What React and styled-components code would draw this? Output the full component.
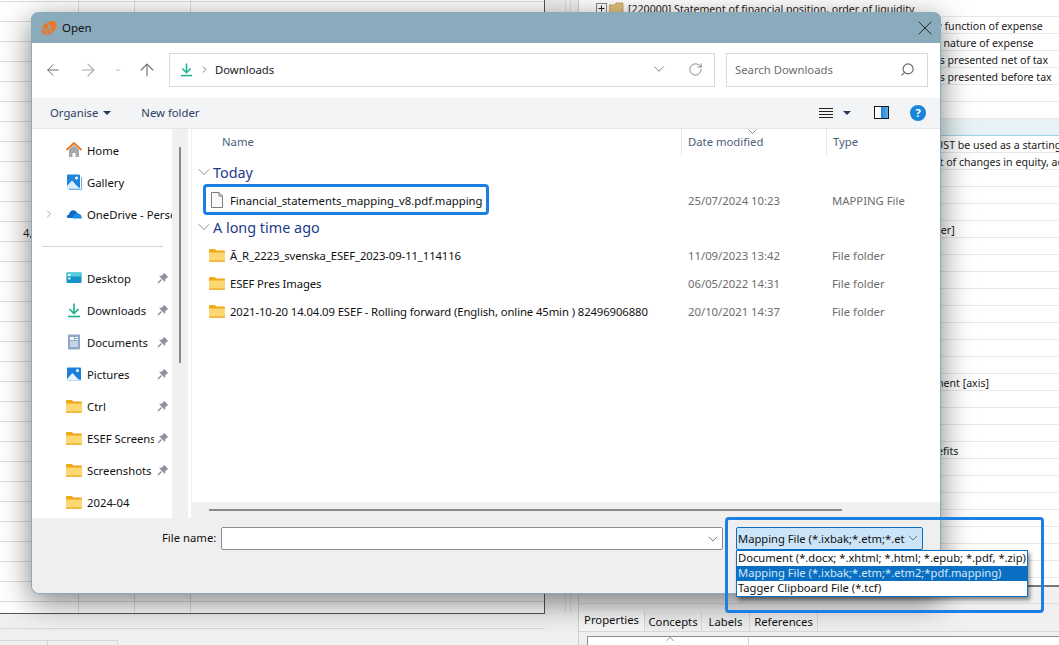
import styled, { createGlobalStyle } from "styled-components";
import { ArrowLeft, ArrowRight, ArrowUp, ChevronDown, ChevronRight, ChevronUp, RotateCw, Search, X } from "lucide-react";

const GlobalStyle = createGlobalStyle`
  html, body {
    margin: 0;
    padding: 0;
    background: #f0f0f0;
  }
  * {
    box-sizing: border-box;
  }
  body {
    font-family: "Noto Sans", "Open Sans", sans-serif;
    font-size: 11.3px;
    color: #1a1a1a;
  }
`;

const Page = styled.div`
  position: relative;
  width: 1059px;
  height: 645px;
  overflow: hidden;
  display: grid;
  grid-template-columns: 545px 33px 481px;
`;

/* sheet behind the dialog */
const SheetColumn = styled.div`
  display: flex;
  flex-direction: column;
  height: 645px;
`;

const Sheet = styled.div`
  height: 614px;
  flex: none;
  background: #fff;
  border-right: 1px solid #555;
  border-bottom: 1px solid #555;
  overflow: hidden;
`;

const SheetRow = styled.div`
  display: grid;
  grid-template-columns: 79px 56px 56px 1fr;
  height: 20px;
  border-bottom: 1px solid #dcdcdc;
  &:first-child {
    height: 2px;
  }
`;

const SheetCell = styled.div`
  border-right: 1px solid #dcdcdc;
  line-height: 21px;
  padding-left: 23px;
  white-space: nowrap;
  overflow: hidden;
`;

const SheetFooter = styled.div`
  flex: 1;
  display: flex;
  flex-direction: column;
`;

const FooterRule = styled.div`
  height: 15px;
  border-bottom: 1px solid #d6d6d6;
`;

const SheetTabs = styled.div`
  display: flex;
  margin-top: 11px;
`;

const SheetTab = styled.div`
  width: ${(p) => p.$w}px;
  height: 8px;
  border: 1px solid #d6d6d6;
  border-bottom: 0;
  border-left: 0;
`;

const Splitter = styled.div`
  display: flex;
  justify-content: space-between;
  padding: 0 7px 32px 20px;
  height: 645px;
`;

const SplitLine = styled.div`
  width: 1px;
  background: #dcdcdc;
`;

const RightColumn = styled.div`
  display: flex;
  flex-direction: column;
  min-width: 0;
  overflow: hidden;
  border-left: 1px solid #cfcfcf;
`;

const TreeList = styled.div`
  height: 587px;
  flex: none;
  background: #fff;
  border-bottom: 2px solid #777;
  overflow: hidden;
`;

const TreeRow = styled.div`
  height: 17px;
  line-height: 16px;
  font-size: 10.6px;
  padding: 1px 0 0 ${(p) => p.$indent}px;
  border-bottom: 1px solid ${(p) => (p.$active ? "#9fd3ea" : "#e8e8e8")};
  background: ${(p) => (p.$active ? "#e6f2f5" : "transparent")};
  white-space: nowrap;
  overflow: hidden;
  display: flex;
  align-items: center;
`;

const TreeIcon = styled.svg`
  width: ${(p) => p.$w}px;
  height: 13px;
  flex: none;
  margin-right: ${(p) => p.$gap}px;
`;

const BottomPanel = styled.div`
  flex: 1;
  background: #f0f0f0;
`;

const PanelRule = styled.div`
  margin-top: 16px;
  height: 1px;
  background: #dedede;
`;

const Tabs = styled.div`
  display: flex;
  align-items: flex-end;
  height: 20px;
  margin-top: 8px;
  border-bottom: 1px solid #d8d8d8;
`;

const Tab = styled.div`
  height: ${(p) => (p.$active ? 20 : 19)}px;
  width: ${(p) => p.$w}px;
  line-height: ${(p) => (p.$active ? 17 : 19)}px;
  text-align: center;
  border-right: 1px solid #d8d8d8;
  background: ${(p) => (p.$active ? "#f6f6f6" : "#eeeeee")};
  color: #111;
`;

const PropHead = styled.div`
  position: relative;
  margin: 4px 0 0 8px;
  height: 20px;
  background: #fff;
  border: 1px solid #8d8d8d;
  border-right: 0;
  display: grid;
  grid-template-columns: 160px 1fr;
`;

const PropCol = styled.div`
  padding: 6px 0 0 7px;
  line-height: 14px;
  & + & {
    border-left: 1px solid #d4d4d4;
  }
`;

const PropSort = styled.span`
  position: absolute;
  left: 75px;
  top: -5px;
  color: #777;
  display: flex;
`;

/* the dialog is a window lying over the sheet */
const Dialog = styled.div`
  position: absolute;
  left: 31px;
  top: 12px;
  width: 910px;
  height: 582px;
  background: #efefef;
  border: 1px solid #8aaabc;
  border-top: 0;
  border-radius: 8px;
  box-shadow: 0 8px 30px rgba(0, 0, 0, 0.5);
  display: flex;
  flex-direction: column;
`;

const TitleBar = styled.div`
  height: 31px;
  flex: none;
  margin: 0 -1px;
  background: #8aabbc;
  border-radius: 8px 8px 0 0;
  display: flex;
  align-items: center;
  padding: 0 4px 0 10px;
`;

const TitleText = styled.span`
  margin-left: 5px;
  flex: 1;
  font-size: 11.5px;
  color: #111;
`;

const AddressBar = styled.div`
  height: 55px;
  flex: none;
  background: #fff;
  display: flex;
  align-items: center;
  padding: 0 12px 1px 12px;
`;

const NavButton = styled.div`
  width: ${(p) => p.$w}px;
  margin-left: ${(p) => p.$left || 0}px;
  display: flex;
  justify-content: center;
  color: ${(p) => p.$color};
`;

const PathBox = styled.div`
  width: 546px;
  height: 34px;
  margin-left: 4px;
  border: 1px solid #d9d9d9;
  display: flex;
  align-items: center;
  padding: 0 11px 2px 9px;
`;

const PathArrow = styled.span`
  display: flex;
  margin-left: 5px;
  color: #666;
`;

const PathName = styled.span`
  flex: 1;
  margin-left: 5px;
  color: #1a1a1a;
`;

const Refresh = styled.span`
  display: flex;
  margin-left: 20px;
  color: #6b6b6b;
`;

const SearchBox = styled.div`
  width: 202px;
  height: 34px;
  margin-left: 11px;
  border: 1px solid #d9d9d9;
  display: flex;
  align-items: center;
  justify-content: space-between;
  padding: 0 12px 2px 8px;
  color: #6d6d6d;
`;

const SearchGlass = styled.span`
  display: flex;
  transform: scaleX(-1);
  color: #666;
`;

const CommandBar = styled.div`
  height: 31px;
  flex: none;
  background: #f3f4f6;
  border-bottom: 1px solid #e6e6e6;
  display: flex;
  align-items: center;
  padding: 0 14px 1px 18px;
  color: #2b3d63;
`;

const Caret = styled.span`
  width: 0;
  height: 0;
  border-left: 4px solid transparent;
  border-right: 4px solid transparent;
  border-top: 4px solid #26395e;
  margin-left: ${(p) => p.$left}px;
`;

const CommandText = styled.span`
  margin-left: ${(p) => p.$left || 0}px;
`;

const Spacer = styled.div`
  flex: 1;
`;

const Body = styled.div`
  height: 389px;
  flex: none;
  display: flex;
  background: #fff;
`;

const NavPane = styled.div`
  width: 140px;
  flex: none;
  padding-top: 5px;
  overflow: hidden;
`;

const NavRow = styled.div`
  position: relative;
  height: 32px;
  display: flex;
  align-items: center;
  padding-left: 34px;
  color: #111;
`;

const NavExpand = styled.span`
  position: absolute;
  left: 11px;
  top: 10px;
  color: #8a8a8a;
  display: flex;
`;

const NavLabel = styled.span`
  margin-left: 5px;
  margin-right: ${(p) => p.$gap || 0}px;
  width: ${(p) => p.$w || 70}px;
  flex: none;
  white-space: nowrap;
  overflow: hidden;
`;

const NavRule = styled.div`
  height: 32px;
  display: flex;
  align-items: center;
  padding: 0 9px 0 10px;
  &::after {
    content: "";
    flex: 1;
    height: 1px;
    background: #d4d4d4;
  }
`;

const NavTrack = styled.div`
  width: 16px;
  flex: none;
  background: #f0f0f0;
  padding: 18px 7px 0;
`;

const NavThumb = styled.div`
  width: 2px;
  height: 216px;
  background: #8a8a8a;
`;

const ListPane = styled.div`
  flex: 1;
  margin-left: 3px;
  border-left: 1px solid #f0f0f0;
  display: flex;
  flex-direction: column;
  min-width: 0;
`;

const ColumnHeads = styled.div`
  height: 26px;
  flex: none;
  display: grid;
  grid-template-columns: 489px 145px 1fr;
  color: #4c607a;
  line-height: 25px;
`;

const ColumnHead = styled.div`
  position: relative;
  padding-left: ${(p) => p.$pad}px;
  & + & {
    border-left: 1px solid #e5e5e5;
  }
`;

const SortCaret = styled.svg`
  position: absolute;
  left: 66px;
  top: 0;
  width: 9px;
  height: 5px;
`;

const Files = styled.div`
  flex: 1;
  padding-top: 6px;
`;

const GroupHead = styled.div`
  height: 22px;
  display: flex;
  align-items: center;
  padding-left: 2px;
  color: #1e3a8a;
  font-size: 14.4px;
`;

const GroupLabel = styled.span`
  margin-left: -1px;
`;

const FileRow = styled.div`
  height: 28px;
  display: grid;
  grid-template-columns: 489px 144px 1fr;
  align-items: center;
`;

const FileName = styled.div`
  display: flex;
  align-items: center;
  padding-left: 17px;
  white-space: nowrap;
  color: #111;
`;

const FileLabel = styled.span`
  margin-left: 5px;
`;

const FolderLabel = styled(FileLabel)`
  letter-spacing: -0.1px;
`;

const FileMeta = styled.div`
  padding-left: 7px;
  color: #6d6d6d;
`;

const FileGap = styled.div`
  height: ${(p) => p.$h}px;
`;

const HScroll = styled.div`
  height: 16px;
  flex: none;
  background: #f0f0f0;
  padding: 7px 0 0 17px;
`;

const HThumb = styled.div`
  width: 633px;
  height: 2px;
  background: #8a8a8a;
`;

const Footer = styled.div`
  flex: 1;
  display: flex;
  align-items: flex-start;
  padding: 9px 0 0 130px;
  background: #efefef;
  border-radius: 0 0 8px 8px;
`;

const FileNameCaption = styled.label`
  width: 59px;
  flex: none;
  line-height: 21px;
  color: #111;
`;

const NameInput = styled.div`
  width: 502px;
  flex: none;
  height: 23px;
  background: #fff;
  border: 1px solid #8c8c8c;
  border-radius: 2px;
  display: flex;
  justify-content: flex-end;
  align-items: center;
  padding-right: 1px;
  color: #666;
`;

const FilterWrap = styled.div`
  position: relative;
  margin-left: 13px;
  font-size: 11.2px;
`;

const FilterSelect = styled.div`
  width: 187px;
  height: 23px;
  background: #cce4f7;
  border: 1px solid #0a6fc2;
  border-radius: 2px;
  display: flex;
  align-items: center;
  justify-content: space-between;
  padding: 0 1px 1px 1px;
  white-space: nowrap;
  color: #111;
`;

const FilterList = styled.div`
  position: absolute;
  left: 0;
  top: 23px;
  width: 292px;
  height: 47px;
  background: #fff;
  border: 1px solid #0a6fc2;
  box-shadow: 2px 3px 4px rgba(0, 0, 0, 0.45);
  white-space: nowrap;
  z-index: 2;
`;

const FilterItem = styled.div`
  height: 15px;
  line-height: 14px;
  padding-left: 1px;
  background: ${(p) => (p.$selected ? "#0a6fc2" : "transparent")};
  color: ${(p) => (p.$selected ? "#d4e8fa" : "#111")};
`;

/* blue annotations drawn on the screenshot */
const Callout = styled.div`
  position: absolute;
  left: ${(p) => p.$x}px;
  top: ${(p) => p.$y}px;
  width: ${(p) => p.$w}px;
  height: ${(p) => p.$h}px;
  border: 3px solid #1b7fe3;
  border-radius: 4px;
  pointer-events: none;
  z-index: 3;
`;

const Glyph = styled.svg`
  flex: none;
  display: block;
  width: ${(p) => p.$s || 16}px;
  height: ${(p) => p.$s || 16}px;
`;

function Logo() {
  return (
    <Glyph $s={16} viewBox="0 0 16 16">
      <g transform="rotate(-40 8 8)">
        <ellipse cx="8" cy="8" rx="8.6" ry="5.8" fill="#e8772a" />
        <path d="M3 2V14M10.5 2 6.5 14" stroke="#8aabbc" strokeWidth="1.1" />
        <path d="M4 7.6H12" stroke="#8aabbc" strokeWidth="1" />
      </g>
    </Glyph>
  );
}

function Folder() {
  return (
    <Glyph viewBox="0 0 16 14">
      <path d="M0 2.2C0 1.5.5 1 1.2 1H5.6L7.4 2.6H14.8C15.5 2.6 16 3.1 16 3.8V6H0Z" fill="#f0a818" />
      <path d="M0 4.4H16V12.2C16 12.9 15.5 13.4 14.8 13.4H1.2C.5 13.4 0 12.9 0 12.2Z" fill="#fcd873" />
      <path d="M0 12.6H16V12.9C16 13.4 15.5 13.8 14.8 13.8H1.2C.5 13.8 0 13.4 0 12.9Z" fill="#eaa51e" />
    </Glyph>
  );
}

function Doc() {
  return (
    <Glyph viewBox="0 0 16 16">
      <path d="M2.5.5H10L13.5 4V15.5H2.5Z" fill="#fafafa" stroke="#7d7d7d" />
      <path d="M10 .5V4H13.5" fill="none" stroke="#7d7d7d" />
    </Glyph>
  );
}

function Home() {
  return (
    <Glyph viewBox="0 0 16 16">
      <path d="M3 7.5 8 3l5 4.5V15H9.5v-4h-3v4H3Z" fill="#a8a8a8" />
      <path d="M.5 8 8 1l7.5 7" fill="none" stroke="#e8761c" strokeWidth="1.8" />
    </Glyph>
  );
}

function Gallery() {
  return (
    <Glyph viewBox="0 0 16 16">
      <rect x="1" y="0.5" width="13" height="14" rx="1" fill="#1f86de" />
      <circle cx="10.5" cy="4" r="1.5" fill="#fff" />
      <path d="M1 12 6 6.5 11 12 14 14.5H1Z" fill="#dff0fc" />
      <path d="M3 15.5H15.5V3" fill="none" stroke="#6bb2ea" />
    </Glyph>
  );
}

function OneDrive() {
  return (
    <Glyph viewBox="0 0 16 16">
      <path d="M3 8.5C3.5 5.5 6 3.5 8.5 4.5 10 5 11 6 11.5 7.5L8 12H2C.3 11.5.3 9 3 8.5Z" fill="#0f6cc4" />
      <path d="M7 12.5C6 10 9 7.5 11.5 7.5 14.5 7.5 16 10 15.8 12.5Z" fill="#1a8fe3" />
    </Glyph>
  );
}

function Desktop() {
  return (
    <Glyph viewBox="0 0 16 16">
      <rect x="0.5" y="2.5" width="15" height="10.5" rx="1" fill="#1592c8" />
      <rect x="0.5" y="2.5" width="15" height="4" fill="#4fd0dc" />
      <rect x="2" y="4" width="2.5" height="2" fill="#fff" />
      <rect x="2" y="7.5" width="2.5" height="2" fill="#d6f3f8" />
    </Glyph>
  );
}

function Download({ size = 16 }) {
  return (
    <Glyph $s={size} viewBox="0 0 16 16">
      <path d="M8 1.5V11M3.5 7 8 11.5 12.5 7" fill="none" stroke="#19b291" strokeWidth="1.6" />
      <path d="M2 14.5H14" stroke="#19b291" strokeWidth="1.6" />
    </Glyph>
  );
}

function Documents() {
  return (
    <Glyph viewBox="0 0 16 16">
      <rect x="2" y="0.5" width="12" height="15" rx="1" fill="#8ea8c6" />
      <rect x="4" y="3" width="4" height="3" fill="#fff" />
      <path d="M9 3.5h3M9 5.5h3M4 8h8M4 10h8M4 12h8" stroke="#fff" />
    </Glyph>
  );
}

function Pictures() {
  return (
    <Glyph viewBox="0 0 16 16">
      <rect x="1" y="1.5" width="14" height="13" rx="1" fill="#1a80dc" />
      <circle cx="11.5" cy="4.5" r="1.5" fill="#fff" />
      <path d="M1 13 6.5 7 12 13 15 14.5H1Z" fill="#e8f4fd" />
    </Glyph>
  );
}

function Pin() {
  return (
    <Glyph $s={12} viewBox="0 0 12 12">
      <path d="M7 .8 11.2 5 9.8 5.8 8.4 7.2 8 10 2 4 4.8 3.6 6.2 2.2Z" fill="#8d949b" />
      <path d="M4.5 7.5 1 11" stroke="#8d949b" strokeWidth="1.4" />
    </Glyph>
  );
}

function ViewIcon() {
  return (
    <Glyph $s={14} viewBox="0 0 14 14">
      <path d="M0 2.5H14M0 5.5H14M0 8.5H14M0 11.5H14" stroke="#222" />
    </Glyph>
  );
}

const PaneBox = styled.span`
  display: block;
  width: 15px;
  height: 13px;
  margin-left: 23px;
  border: 1px solid #1a1a1a;
  background: linear-gradient(to right, #fff 0 6px, #1c86dc 6px, #5db0ee 100%);
`;

const HelpDot = styled.span`
  width: 16px;
  height: 16px;
  border-radius: 50%;
  background: #1a85d8;
  color: #fff;
  font-size: 11px;
  font-weight: 700;
  line-height: 16px;
  text-align: center;
  margin-left: 21px;
`;

const navTop = [
  { label: "Home", icon: <Home /> },
  { label: "Gallery", icon: <Gallery /> },
  { label: "OneDrive - Personal", icon: <OneDrive />, expand: true, width: 85 },
];

const navPinned = [
  { label: "Desktop", icon: <Desktop />, pin: true },
  { label: "Downloads", icon: <Download />, pin: true },
  { label: "Documents", icon: <Documents />, pin: true },
  { label: "Pictures", icon: <Pictures />, pin: true },
  { label: "Ctrl", icon: <Folder />, pin: true },
  { label: "ESEF Screens", icon: <Folder />, pin: true, width: 67, gap: 3 },
  { label: "Screenshots", icon: <Folder />, pin: true },
  { label: "2024-04", icon: <Folder /> },
];

const folders = [
  { name: "Ã_R_2223_svenska_ESEF_2023-09-11_114116", date: "11/09/2023 13:42" },
  { name: "ESEF Pres Images", date: "06/05/2022 14:31" },
  { name: "2021-10-20 14.04.09 ESEF - Rolling forward (English, online 45min ) 82496906880", date: "20/10/2021 14:37" },
];

const treeText = {
  1: { text: "by function of expense", indent: 351 },
  2: { text: "by nature of expense", indent: 350 },
  3: { text: "is presented net of tax", indent: 358 },
  4: { text: "is presented before tax", indent: 358 },
  8: { text: "MUST be used as a starting point", indent: 347 },
  9: { text: "nt of changes in equity, additional", indent: 354 },
  13: { text: "[member]", indent: 326 },
  22: { text: "adjustment [axis]", indent: 324 },
  26: { text: "benefits", indent: 339 },
};

function Row({ item }) {
  return (
    <NavRow>
      {item.expand && (
        <NavExpand>
          <ChevronRight size={12} strokeWidth={1.5} />
        </NavExpand>
      )}
      {item.icon}
      <NavLabel $w={item.width} $gap={item.gap}>{item.label}</NavLabel>
      {item.pin && <Pin />}
    </NavRow>
  );
}

export default function App() {
  return (
    <Page>
      <GlobalStyle />
      <SheetColumn>
        <Sheet>
          {Array.from({ length: 32 }, (_, i) => (
            <SheetRow key={i}>
              <SheetCell>{i === 12 ? "4," : ""}</SheetCell>
              <SheetCell />
              <SheetCell />
            </SheetRow>
          ))}
        </Sheet>
        <SheetFooter>
          <FooterRule />
          <SheetTabs>
            <SheetTab $w={48} />
            <SheetTab $w={70} />
          </SheetTabs>
        </SheetFooter>
      </SheetColumn>
      <Splitter>
        <SplitLine />
        <SplitLine />
      </Splitter>
      <RightColumn>
        <TreeList>
          <TreeRow $indent={16}>
            <TreeIcon $w={13} $gap={1} viewBox="0 0 13 13">
              <rect x="1.5" y="1.5" width="10" height="10" fill="#fff" stroke="#888" />
              <path d="M3.5 6.5H9.5M6.5 3.5V9.5" stroke="#223" />
            </TreeIcon>
            <TreeIcon $w={15} $gap={4} viewBox="0 0 15 13">
              <path d="M0 3H6L7 1H14V12H0Z" fill="#e3c27a" stroke="#a5853f" strokeWidth="0.6" />
            </TreeIcon>
            <span>[220000] Statement of financial position, order of liquidity</span>
          </TreeRow>
          {Array.from({ length: 34 }, (_, i) => {
            const row = treeText[i + 1];
            return (
              <TreeRow key={i} $active={i === 6} $indent={row ? row.indent : 0}>
                {row ? row.text : ""}
              </TreeRow>
            );
          })}
        </TreeList>
        <BottomPanel>
          <PanelRule />
          <Tabs>
            <Tab $active $w={66}>Properties</Tab>
            <Tab $w={57}>Concepts</Tab>
            <Tab $w={48}>Labels</Tab>
            <Tab $w={68}>References</Tab>
          </Tabs>
          <PropHead>
            <PropSort>
              <ChevronUp size={14} strokeWidth={1.3} />
            </PropSort>
            <PropCol>Name</PropCol>
            <PropCol>Value</PropCol>
          </PropHead>
        </BottomPanel>
      </RightColumn>

      <Dialog>
        <TitleBar>
          <Logo />
          <TitleText>Open</TitleText>
          <X size={24} strokeWidth={0.9} color="#1c1c1c" />
        </TitleBar>
        <AddressBar>
          <NavButton $w={18} $color="#6b6b6b">
            <ArrowLeft size={20} strokeWidth={1.3} />
          </NavButton>
          <NavButton $w={52} $color="#a8a8a8">
            <ArrowRight size={20} strokeWidth={1.3} />
          </NavButton>
          <NavButton $w={8} $color="#6b6b6b">
            <ChevronDown size={18} strokeWidth={1.3} />
          </NavButton>
          <NavButton $w={36} $left={7} $color="#6b6b6b">
            <ArrowUp size={20} strokeWidth={1.3} />
          </NavButton>
          <PathBox>
            <Download size={15} />
            <PathArrow>
              <ChevronRight size={11} strokeWidth={1.8} />
            </PathArrow>
            <PathName>Downloads</PathName>
            <ChevronDown size={18} strokeWidth={1.1} color="#6b6b6b" />
            <Refresh>
              <RotateCw size={15} strokeWidth={1.3} />
            </Refresh>
          </PathBox>
          <SearchBox>
            Search Downloads
            <SearchGlass>
              <Search size={15} strokeWidth={1.8} />
            </SearchGlass>
          </SearchBox>
        </AddressBar>
        <CommandBar>
          Organise
          <Caret $left={5} />
          <CommandText $left={30}>New folder</CommandText>
          <Spacer />
          <ViewIcon />
          <Caret $left={10} />
          <PaneBox />
          <HelpDot>?</HelpDot>
        </CommandBar>
        <Body>
          <NavPane>
            {navTop.map((item) => (
              <Row key={item.label} item={item} />
            ))}
            <NavRule />
            {navPinned.map((item) => (
              <Row key={item.label} item={item} />
            ))}
          </NavPane>
          <NavTrack>
            <NavThumb />
          </NavTrack>
          <ListPane>
            <ColumnHeads>
              <ColumnHead $pad={30}>Name</ColumnHead>
              <ColumnHead $pad={6}>
                Date modified
                <SortCaret viewBox="0 0 9 5">
                  <path d="M.5.5 4.5 4.5 8.5.5" fill="none" stroke="#8a8a8a" />
                </SortCaret>
              </ColumnHead>
              <ColumnHead $pad={6}>Type</ColumnHead>
            </ColumnHeads>
            <Files>
              <GroupHead>
                <ChevronDown size={20} strokeWidth={1} color="#777" />
                <GroupLabel>Today</GroupLabel>
              </GroupHead>
              <FileGap $h={3} />
              <FileRow>
                <FileName>
                  <Doc />
                  <FileLabel>Financial_statements_mapping_v8.pdf.mapping</FileLabel>
                </FileName>
                <FileMeta>25/07/2024 10:23</FileMeta>
                <FileMeta>MAPPING File</FileMeta>
              </FileRow>
              <FileGap $h={2} />
              <GroupHead>
                <ChevronDown size={20} strokeWidth={1} color="#777" />
                <GroupLabel>A long time ago</GroupLabel>
              </GroupHead>
              <FileGap $h={3} />
              {folders.map((f) => (
                <FileRow key={f.name}>
                  <FileName>
                    <Folder />
                    <FolderLabel>{f.name}</FolderLabel>
                  </FileName>
                  <FileMeta>{f.date}</FileMeta>
                  <FileMeta>File folder</FileMeta>
                </FileRow>
              ))}
            </Files>
            <HScroll>
              <HThumb />
            </HScroll>
          </ListPane>
        </Body>
        <Footer>
          <FileNameCaption>File name:</FileNameCaption>
          <NameInput>
            <ChevronDown size={16} strokeWidth={1.2} />
          </NameInput>
          <FilterWrap>
            <FilterSelect>
              Mapping File (*.ixbak;*.etm;*.et
              <ChevronDown size={16} strokeWidth={1.2} color="#555" />
            </FilterSelect>
            <FilterList>
              <FilterItem>Document (*.docx; *.xhtml; *.html; *.epub; *.pdf, *.zip)</FilterItem>
              <FilterItem $selected>Mapping File (*.ixbak;*.etm;*.etm2;*pdf.mapping)</FilterItem>
              <FilterItem>Tagger Clipboard File (*.tcf)</FilterItem>
            </FilterList>
          </FilterWrap>
        </Footer>
      </Dialog>
      <Callout $x={203} $y={184} $w={286} $h={31} />
      <Callout $x={725} $y={517} $w={319} $h={96} />
    </Page>
  );
}
